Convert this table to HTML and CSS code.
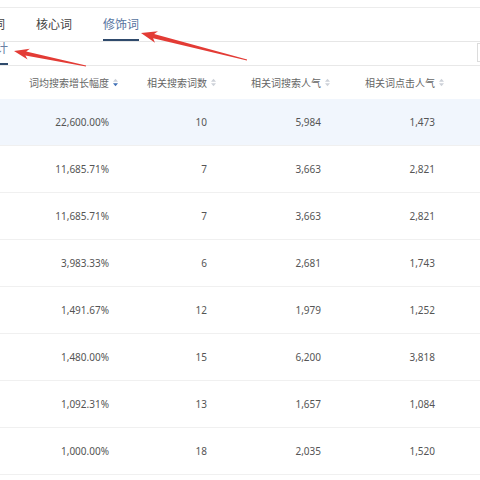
FILE: index.html
```html
<!DOCTYPE html>
<html lang="zh-CN">
<head>
<meta charset="utf-8">
<title>修饰词</title>
<link rel="stylesheet" href="styles.css">
</head>
<body>
<div class="page">
  <div class="topbar"></div>
  <div class="tabs">
    <div class="tab">品类词</div>
    <div class="tab">核心词</div>
    <div class="tab active">修饰词</div>
  </div>
  <div class="subbar">
    <div class="subtab">统计</div>
    <div class="search"></div>
  </div>
  <div class="table">
    <div class="row head">
      <div class="cell">词均搜索增长幅度<svg class="sort" viewBox="0 0 6 10"><path class="up" d="M0 4L3 0.6L6 4Z"/><path class="down on" d="M0 6L3 9.4L6 6Z"/></svg></div>
      <div class="cell">相关搜索词数<svg class="sort" viewBox="0 0 6 10"><path class="up" d="M0 4L3 0.6L6 4Z"/><path class="down" d="M0 6L3 9.4L6 6Z"/></svg></div>
      <div class="cell">相关词搜索人气<svg class="sort" viewBox="0 0 6 10"><path class="up" d="M0 4L3 0.6L6 4Z"/><path class="down" d="M0 6L3 9.4L6 6Z"/></svg></div>
      <div class="cell">相关词点击人气<svg class="sort" viewBox="0 0 6 10"><path class="up" d="M0 4L3 0.6L6 4Z"/><path class="down" d="M0 6L3 9.4L6 6Z"/></svg></div>
      <div class="cell"></div>
    </div>
    <div class="row hl"><div class="cell">22,600.00%</div><div class="cell">10</div><div class="cell">5,984</div><div class="cell">1,473</div><div class="cell"></div></div>
    <div class="row"><div class="cell">11,685.71%</div><div class="cell">7</div><div class="cell">3,663</div><div class="cell">2,821</div><div class="cell"></div></div>
    <div class="row"><div class="cell">11,685.71%</div><div class="cell">7</div><div class="cell">3,663</div><div class="cell">2,821</div><div class="cell"></div></div>
    <div class="row"><div class="cell">3,983.33%</div><div class="cell">6</div><div class="cell">2,681</div><div class="cell">1,743</div><div class="cell"></div></div>
    <div class="row"><div class="cell">1,491.67%</div><div class="cell">12</div><div class="cell">1,979</div><div class="cell">1,252</div><div class="cell"></div></div>
    <div class="row"><div class="cell">1,480.00%</div><div class="cell">15</div><div class="cell">6,200</div><div class="cell">3,818</div><div class="cell"></div></div>
    <div class="row"><div class="cell">1,092.31%</div><div class="cell">13</div><div class="cell">1,657</div><div class="cell">1,084</div><div class="cell"></div></div>
    <div class="row"><div class="cell">1,000.00%</div><div class="cell">18</div><div class="cell">2,035</div><div class="cell">1,520</div><div class="cell"></div></div>
    <div class="row"><div class="cell"></div><div class="cell"></div><div class="cell"></div><div class="cell"></div><div class="cell"></div></div>
  </div>
  <svg class="arrows" viewBox="0 0 480 480" width="480" height="480">
    <polygon points="14,51 29.8,48.7 26.2,51.4 86.1,65.5 85.9,66.5 25.4,55.4 27.6,59.5"/>
    <polygon points="141,33 158,31.2 154.1,34.1 247.1,59.5 246.9,60.5 153.1,38.3 155,42.8"/>
  </svg>
</div>
</body>
</html>
```
FILE: styles.css
```css
html, body {
  margin: 0;
  padding: 0;
  background: #fff;
  overflow: hidden;
}
.page {
  position: relative;
  width: 480px;
  height: 480px;
  overflow: hidden;
  font-family: "Noto Sans CJK SC", sans-serif;
  color: #333;
}
.topbar {
  height: 7px;
  border-bottom: 1px solid #ececec;
}
.tabs {
  display: flex;
  gap: 31px;
  height: 33px;
  margin-left: -31px;
  border-bottom: 1px solid #e6e6e6;
}
.tab {
  box-sizing: border-box;
  height: 33px;
  padding-top: 8px;
  font-size: 12px;
  line-height: 16px;
  color: #444;
  border-bottom: 2px solid transparent;
}
.tab.active {
  color: #5673a0;
  border-bottom-color: #2f4a6c;
}
.subbar {
  display: flex;
  justify-content: space-between;
  align-items: flex-start;
  height: 23px;
  border-bottom: 1px solid #e8e8e8;
}
.subtab {
  box-sizing: border-box;
  height: 23px;
  margin-left: -16px;
  padding-top: 0;
  font-size: 12px;
  line-height: 12px;
  color: #6a7fa3;
  border-bottom: 2px solid #2f4a6c;
}
.search {
  box-sizing: border-box;
  width: 60px;
  height: 19px;
  margin-top: 1px;
  margin-right: -57px;
  border: 1px solid #dcdcdc;
}
.table {
  display: flex;
  flex-direction: column;
}
.row {
  display: grid;
  grid-template-columns: 122px 98px 114px 114px 1fr;
  height: 47px;
  box-sizing: border-box;
  border-bottom: 1px solid #f0f0f0;
  font-family: "Noto Sans", "Noto Sans CJK SC", sans-serif;
  font-size: 10px;
  color: #555;
}
.row.head {
  height: 33px;
  border-bottom: none;
  font-family: "Noto Sans CJK SC", sans-serif;
  color: #666;
}
.row.hl {
  background: #f1f6fd;
}
.cell {
  display: flex;
  align-items: center;
  justify-content: flex-end;
  padding-right: 13px;
}
.head .cell {
  padding-right: 4px;
}
.sort {
  width: 5px;
  height: 9px;
  margin-left: 4px;
}
.sort path {
  fill: #cdd1d8;
}
.sort path.on {
  fill: #3f6fb5;
}
.arrows {
  position: absolute;
  left: 0;
  top: 0;
  pointer-events: none;
}
.arrows polygon {
  fill: #e33b35;
}
```
